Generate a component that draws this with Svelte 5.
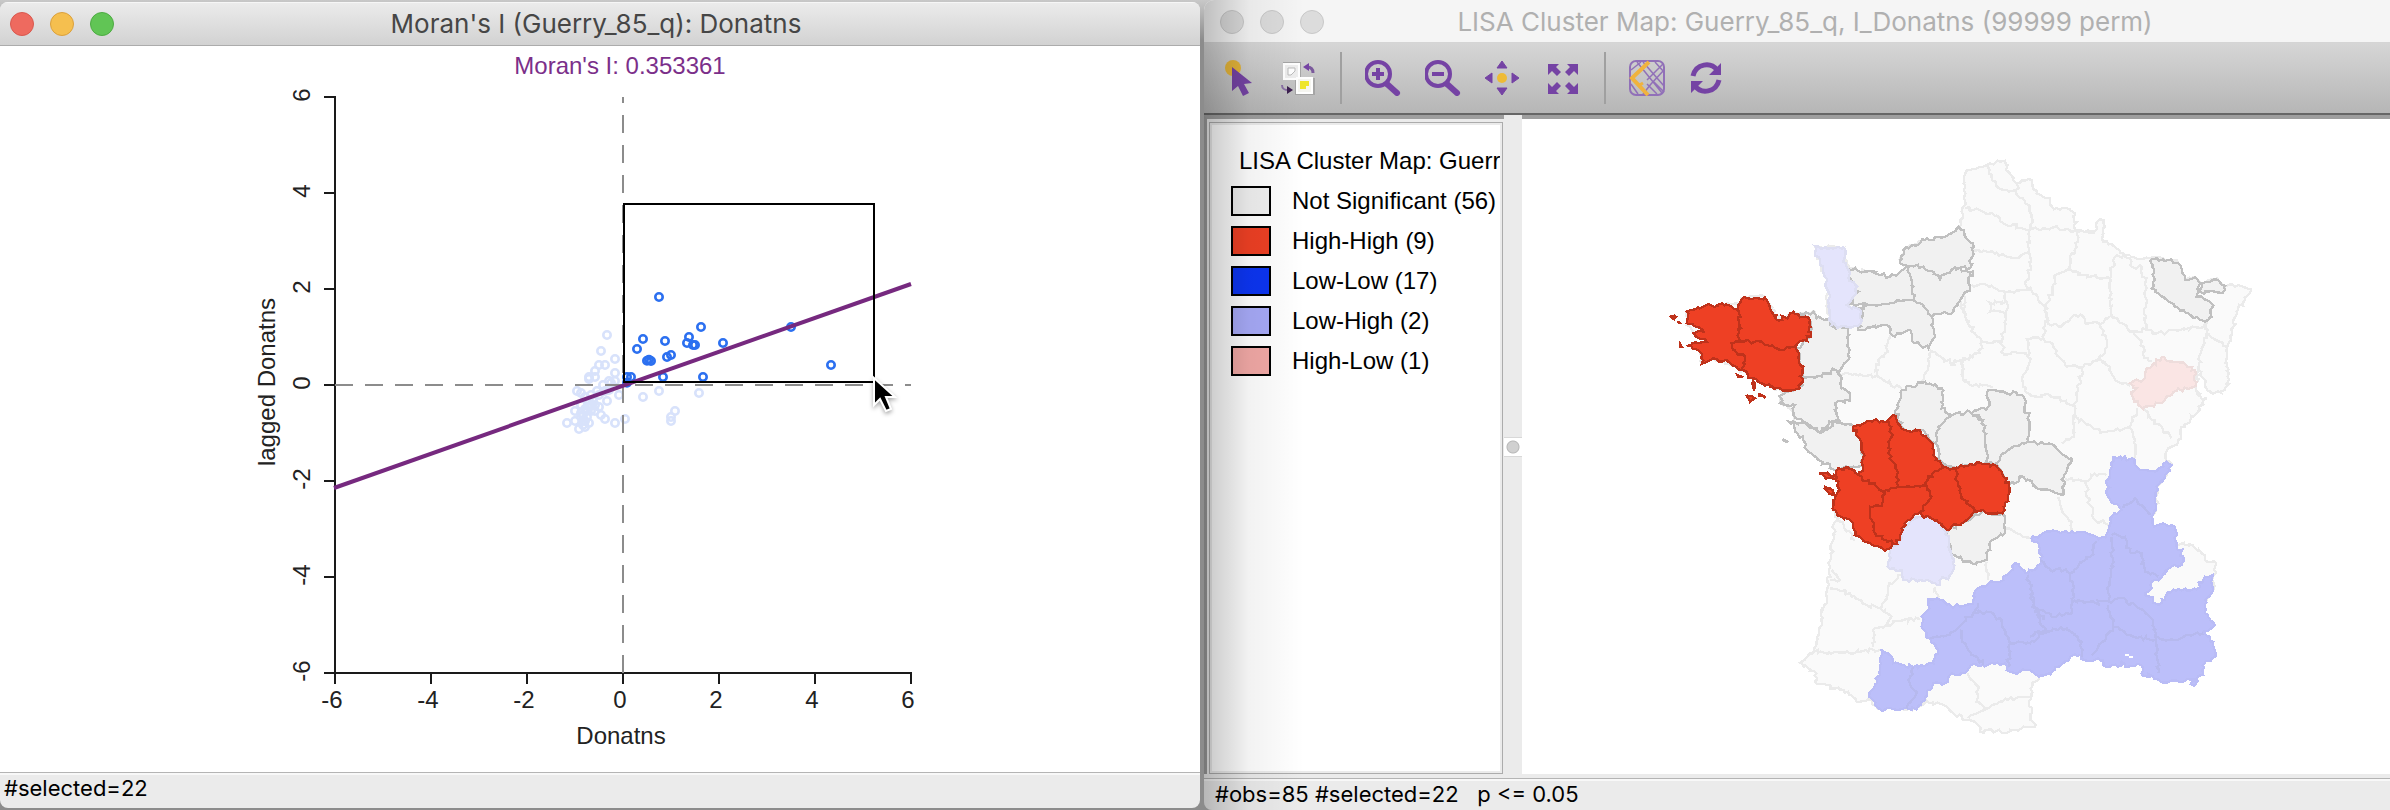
<script>
  // Plot coordinates: one data unit is 48 user units, origin at (623, 385).
  const px = (v) => 623 + v * 48;
  const py = (v) => 385 - v * 48;
  const ticks = [-6, -4, -2, 0, 2, 4, 6];

  const pairs = (s) => s.trim().split(/\s+/).map((p) => p.split(',').map(Number));

  // Scatter positions in thirds of a unit from (540, 270).
  const selected = pairs(
    '357,81 483,171 309,207 375,213 447,201 441,219 459,225 465,225 549,219 291,237 393,255 381,261 321,272 327,269 333,273 369,321 489,321 261,321 273,321 261,338 753,171 873,285'
  );
  const others = pairs(
    '201,195 183,243 225,267 177,285 195,285 165,303 225,309 147,321 165,321 147,327 207,333 213,339 189,345 111,363 237,375 207,360 201,393 309,381 357,363 477,369 405,423 393,453 393,441 81,459 105,423 123,405 117,477 105,453 129,435 141,441 147,459 135,471 153,423 165,423 165,405 177,411 183,435 195,447 225,459 255,447 135,453 123,441 123,429 147,411 123,369 135,381 153,375 177,375 141,423 171,363 195,363 159,393 129,453 225,333 147,393 135,417 153,405 129,465'
  );

  const legend = [
    ['Not Significant (56)', 'none'],
    ['High-High (9)', 'hh'],
    ['Low-Low (17)', 'll'],
    ['Low-High (2)', 'lh'],
    ['High-Low (1)', 'hl']
  ];

  // Map sheets: a letter in a path switches the sheet its points are measured on.
  const sheets = { a: [0, 0], b: [900, 0], c: [360, 720], d: [1140, 720] };

  function noise(x, y) {
    const n = Math.sin(x * 12.9898 + y * 78.233) * 43758.5453;
    return (n - Math.floor(n)) * 2 - 1;
  }

  // Reads a path and roughens each edge so that shared borders stay identical.
  function shape(src, closed) {
    let off = sheets.a;
    const nums = [];
    for (const t of src.trim().split(/[\s,]+/)) {
      if (sheets[t]) off = sheets[t];
      else nums.push(+t + off[nums.length % 2]);
    }
    const pts = [];
    for (let i = 0; i < nums.length; i += 2) pts.push([nums[i], nums[i + 1]]);
    if (closed) pts.push(pts[0]);
    const out = [pts[0]];
    for (let i = 1; i < pts.length; i++) {
      const [x0, y0] = pts[i - 1];
      const [x1, y1] = pts[i];
      const n = Math.max(1, Math.round(Math.hypot(x1 - x0, y1 - y0) / 9));
      for (let k = 1; k <= n; k++) {
        const x = Math.round(x0 + ((x1 - x0) * k) / n);
        const y = Math.round(y0 + ((y1 - y0) * k) / n);
        out.push(k === n ? [x, y] : [x + Math.round(noise(x, y) * 6), y + Math.round(noise(y, x) * 6)]);
      }
    }
    return 'M' + out.map((p) => p.join(' ')).join('L') + (closed ? 'Z' : '');
  }

  const area = (list) => list.map((s) => shape(s, true)).join('');
  const lines = (list) => list.map((s) => shape(s, false)).join('');

  const country = area([
    `b 45 105 60 90 100 80 120 70 165 62 175 95 198 130 225 122 245 120 260 160 300 175 312 208 350 205 375 225 380 275 435 272 442 245 462 240 460 305 500 325 540 355 600 355 640 355 685 370 705 420 730 412 755 430 800 415 825 440 865 435 903 447 860 515 845 585 832 620 830 680 837 720 825 750 785 760 765 735 745 690 737 740 752 770 770 775 740 820 693 862
     d 453 178 415 205 408 245 425 250 405 290 380 320 378 390 365 410 370 440 400 430 435 440 440 490 490 497 515 520 525 540 557 548 558 580 548 590 550 625 525 660 525 700 555 735 520 755 550 785 557 820 525 850 520 885 460 905 400 908 370 890 335 880 330 855 285 862 275 845 262 860 220 855 218 840 155 838 150 825 120 830 75 870 28 890 15 905 2 925 2 1020 15 1040
     c 760 1040 710 1060 665 1050 630 1055 625 1035 590 1020 550 1000 520 975 470 962 440 985 380 990 330 988 295 958 260 965 235 935 170 915 135 905 140 880 90 848 130 820 150 740 170 650 180 560 195 425 205 415 190 390 200 350 210 310 200 270 145 240 115 215 100 180 75 155 70 125 70 100 30 65 35 45
     a 400 755 360 740 305 715 260 680 235 670 190 655 155 670 150 640 170 600 135 580 110 555 110 515 160 500 215 490 270 498 275 475 345 470 385 540 430 515 480 520 495 515 500 535 540 535 530 500 535 420 510 370 495 318 580 325 580 355 600 385 650 395 720 410 775 380 750 365 765 325 825 300 885 290 925 260 940 225`
  ]);

  const borders = lines([
    'b 45 205 90 210 150 235 160 250 240 268',
    'b 110 75 125 115 160 150 200 150',
    'b 200 130 200 165 225 185 245 225 240 268',
    'b 240 268 310 262 375 272 435 280',
    'b 65 330 75 332 140 338 180 352 240 340',
    'b 240 268 235 320 242 380 225 430 250 462 285 500 292 540 280 595 230 597 240 640 232 685 215 720 225 755',
    'b 65 435 110 435 165 455 245 450',
    'b 380 280 380 320 360 350 360 388 315 405 300 480 285 510 290 545',
    'b 360 388 400 405 440 412 480 415 495 350 540 345',
    'b 540 355 545 380 575 380 590 445 585 550 590 570 620 580 690 570 750 565 770 545',
    'b 480 415 485 530 550 575 590 570',
    'b 292 545 330 562 375 525 400 530 405 550 450 552 480 530',
    'b 450 552 470 600 465 640 445 655 400 680 350 680 310 620 280 595',
    'b 445 655 480 680 495 720 540 738',
    'b 550 575 580 620 580 645 605 665',
    'b 770 545 770 580 752 640 745 690',
    'b 770 580 830 620',
    'b 40 465 45 530 75 580 95 605 155 605 165 560 170 455',
    'b 170 485 118 488 120 515 165 522',
    'b 95 605 90 640 35 660 0 675',
    'b 35 660 40 720 60 735 110 735 130 740',
    'b 155 605 160 640 232 640',
    'b 225 755 260 770 300 765 375 800 385 750 395 680',
    'b 375 800 370 840 372 890 335 910',
    'b 375 830 450 878 540 865 560 805',
    'b 540 865 555 900 555 965',
    'b 580 805 605 840 665 895',
    'd 105 295 140 300 180 298 180 283 230 285',
    'd 170 305 170 350 185 380 190 415 235 435',
    'd 85 350 95 390 125 425 125 455',
    'c 705 445 740 460 785 475',
    'c 650 545 655 600',
    'c 495 620 500 655',
    'c 180 625 240 640 290 675 330 685 350 650 355 620 395 585',
    'c 330 685 365 710 350 735 315 745 310 800',
    'c 350 735 400 720 450 718',
    'c 130 815 225 818 330 810',
    'c 205 415 255 480',
    'c 185 570 210 600 180 600',
    'c 595 880 600 895 625 920 620 965 655 985 690 965 750 950 785 955',
    'c 655 985 595 1015',
    'a 570 700 640 708 680 708 685 660 705 640 720 585',
    'a 680 708 755 745',
    'a 840 630 835 680 815 725',
    'a 840 630 900 670 960 655',
    'a 935 655 940 720 960 725',
    'a 930 480 945 530 960 545'
  ]);

  const plain = area([
    'a 750 370 760 330 825 300 885 290 925 260 968 310 960 385 915 382 870 418 820 380 775 380',
    'a 775 380 820 380 870 418 915 382 968 395 950 455 928 485 910 515 845 530 820 495 790 480 790 440',
    'a 595 388 650 395 720 410 775 380 790 440 790 480 720 490 655 495 590 495 625 455 600 415',
    'a 630 505 655 495 720 490 790 480 820 495 845 530 855 590 835 625 785 600 780 570 735 590 705 555 625 570 635 540',
    'a 450 525 490 515 500 535 540 540 550 560 597 560 595 660 570 690 545 690 515 710 460 712 440 625 483 590 483 545',
    'a 395 765 450 740 460 712 515 710 545 690 570 705 575 745 600 760 600 782 555 790 565 835 530 870 515 878 470 850 430 825 435 795 390 790',
    'c 70 125 95 128 150 158 175 135 200 120 250 140 275 190 280 255 235 262 200 270 145 240 115 215 100 180 75 155',
    'c 375 100 395 30 465 5 515 25 515 85 548 105 505 140 495 190 460 150 405 150',
    'c 548 105 600 95 640 120 645 185 655 250 600 258 525 262 495 190 505 140',
    'c 605 100 655 80 655 30 700 35 755 45 775 110 775 185 715 210 680 250 655 250 645 185 640 120',
    'c 680 250 715 210 775 185 850 195 880 225 905 245 880 295 880 345 800 325 760 290 715 320',
    'c 530 455 570 430 640 393 700 405 705 460 660 485 650 540 605 550 550 525 530 490',
    'b 600 362 640 358 685 370 705 420 735 412 752 430 740 470 785 490 785 530 765 545 690 512 655 485 605 445 612 400',
    'b 755 430 800 418 825 438 818 460 750 455',
    'c 55 125 68 128 62 132',
    'c 38 178 55 186 44 184'
  ]);

  const pale = area([
    'a 495 318 520 325 580 322 585 350 580 365 592 385 595 415 622 440 610 470 590 495 630 510 635 540 625 558 590 560 545 555 535 500 532 420 510 375',
    'c 455 402 500 420 530 455 535 500 553 540 545 580 500 615 470 600 400 600 395 570 353 560 360 505 395 475 400 445'
  ]);

  const low = area([
    `d 250 232 305 235 330 270 375 275 410 245 425 255 405 285 380 320 378 388 365 410 372 440 400 430 435 440 440 490 460 530 455 555 425 560 390 595 365 605 365 625 345 640 385 675 405 650 430 628 500 628 520 600 548 585 550 630 525 660 525 700 555 735 520 755 550 785 557 820 525 850 520 885 460 905 400 908 370 890 335 880 330 855 285 862 275 845 262 860 220 855 218 840 155 838 150 825 120 830 75 870 28 890
     c 775 870 735 880 710 870 705 850 640 855 600 858 585 880 540 885 525 910 490 910 465 960 440 988 380 990 330 988 297 950 320 900 330 860 332 808 365 830 370 850 430 862 490 850 495 825 505 810 480 775 455 740 455 710 478 685 475 658 510 660 545 680 610 670 615 635 660 605 700 600 735 550 775 580 815 550 808 500 785 475 830 455
     d 120 460 175 462 205 478 235 455 240 415 275 390 235 350 230 300`,
    'd 482 912 502 904 496 914'
  ]);

  const lowBorders = lines([
    'd 280 385 315 355 360 405',
    'd 245 465 285 470 300 515 335 520 345 575 385 590',
    'd 245 470 250 560 235 620 235 665',
    'd 200 485 180 530 120 580 130 640 125 700 65 710 15 685 0 640',
    'd 30 540 60 570 90 565 120 580',
    'd 130 660 165 670 235 665 270 655 340 690 370 720 375 770 385 880',
    'd 375 770 430 780 480 765 520 760',
    'd 235 675 250 740 205 800 185 825',
    'd 250 740 310 770 375 780',
    'd 0 770 45 750 110 745 155 785 155 830',
    'd 45 750 15 690',
    'c 480 775 540 765 610 700 650 695 695 720 720 790 715 860',
    'c 570 750 590 800 640 855',
    'c 720 790 780 790 830 750',
    'c 775 585 790 680 820 720',
    'c 430 862 415 900 440 940 410 985',
    'c 610 700 625 670'
  ]);

  const pink = area(['b 635 652 660 665 700 668 735 690 737 738 680 752 630 790 580 807 545 765 560 745 540 730 585 715 590 685']);

  const high = area([
    'a 215 490 265 510 270 605 245 610 250 630 285 650 275 690 235 665 190 655 155 672 150 635 110 618 170 605 165 597 130 580 160 575 140 562 110 550 110 515 160 500',
    'a 275 478 345 472 365 515 385 542 430 515 480 540 483 590 435 620 390 630 335 605 270 605 265 510',
    'a 245 610 270 605 335 605 390 630 435 620 445 650 460 680 450 745 400 752 360 740 305 715 275 690 285 650 250 630',
    'a 62 530 78 530 72 538',
    'a 85 544 89 549 86 549',
    'a 92 615 95 620 92 620',
    'a 290 768 315 775 300 785',
    'a 262 705 280 712 266 712',
    'a 309 722 315 730 312 748',
    'a 327 760 345 774 340 768',
    'c 250 140 300 122 355 122 365 160 355 220 380 270 385 320 340 335 265 285 280 260 275 190',
    'c 355 122 370 105 405 150 450 150 490 195 490 225 520 262 475 290 470 320 385 320 380 270 355 220 365 160',
    'c 205 265 235 262 265 285 340 335 335 378 300 380 305 420 318 465 370 492 345 512 300 490 255 465 250 435 190 390 190 360 210 330 200 290',
    'c 147 280 178 285 200 292 196 298 165 290',
    'c 165 320 182 326 196 350 178 342',
    'c 340 335 385 320 470 320 485 350 450 395 395 445 390 480 370 492 318 465 305 420 300 380 335 378',
    'c 475 290 520 262 552 265 565 310 575 355 620 395 575 430 530 450 500 420 455 405 450 395 485 350 470 320',
    'c 552 265 600 252 680 258 710 295 717 340 697 400 665 400 640 390 620 395 575 355 565 310'
  ]);
</script>

<main class="desktop">
  <section class="window front" aria-label="Moran scatter plot">
    <header class="titlebar">
      <div class="lights">
        <button class="light close" aria-label="Close"></button>
        <button class="light minimise" aria-label="Minimise"></button>
        <button class="light expand" aria-label="Zoom"></button>
      </div>
      <h1>Moran's I (Guerry_85_q): Donatns</h1>
    </header>
    <div class="plot">
      <svg viewBox="0 46 1200 726" role="img" aria-label="Moran's I scatter plot">
        <text class="stat" x="620" y="74">Moran's I: 0.353361</text>
        <path class="axis" d="M335 96V673H912" />
        {#each ticks as t}
          <path class="axis" d="M324 {py(t)}H335M{px(t)} 673V684" />
          <text x={px(t) - 3} y="708">{t}</text>
          <text transform="translate(310 {py(t) - 2}) rotate(-90)">{t}</text>
        {/each}
        <text x="621" y="744">Donatns</text>
        <text transform="translate(275 382) rotate(-90)">lagged Donatns</text>
        <g class="faded">
          {#each others as [x, y]}<circle cx={540 + x / 3} cy={270 + y / 3} r="3.7" />{/each}
        </g>
        <path class="guide" d="M623 673V97M335 385H911" />
        <g class="picked">
          {#each selected as [x, y]}<circle cx={540 + x / 3} cy={270 + y / 3} r="3.7" />{/each}
        </g>
        <path class="fit" d="M334 488L911 284" />
        <rect class="band" x="624" y="204" width="250" height="178" />
        <path class="pointer" d="M874 378V405L880 399L886 411L891 409L886 397H895Z" />
      </svg>
    </div>
    <footer class="status">#selected=22</footer>
  </section>

  <section class="window back" aria-label="LISA cluster map">
    <header class="titlebar">
      <div class="lights">
        <button class="light" aria-label="Close"></button>
        <button class="light" aria-label="Minimise"></button>
        <button class="light" aria-label="Zoom"></button>
      </div>
      <h1>LISA Cluster Map: Guerry_85_q, I_Donatns (99999 perm)</h1>
    </header>
    <nav class="toolbar" aria-label="Map tools">
      <button aria-label="Select">
        <svg viewBox="0 0 36 36"><circle cx="12" cy="8" r="8" fill="#e5b53a" /><path fill="#7543a4" d="M11 7V31L17 26L22 36L28 33L23 24L31 23Z" /></svg>
      </button>
      <button aria-label="Invert selection">
        <svg viewBox="0 0 36 36">
          <path fill="#a5a5a5" d="M2 2H20V18H34V35H14V20H2Z" />
          <rect x="3" y="4" width="15" height="15" fill="#eee" stroke="#fff" stroke-width="2" />
          <path d="M7 15V8H14V11L10 15Z" fill="#fff" stroke="#bbb" stroke-width="1" />
          <rect x="16" y="18" width="15" height="15" fill="#f5f5f0" stroke="#fff" stroke-width="2" />
          <path d="M19 29V21H28V26H25V29Z" fill="#eee52c" />
          <path d="M32 13C32 9 30 7 26 7" fill="none" stroke="#7b5a9c" stroke-width="3" /><path d="M28 3V11L22 7Z" fill="#7543a4" />
          <path d="M1 25C1 29 3 30 8 30" fill="none" stroke="#8a70a5" stroke-width="2" /><path d="M6 26V34L12 30Z" fill="#3d2050" />
        </svg>
      </button>
      <span class="rule"></span>
      <button aria-label="Zoom in">
        <svg viewBox="0 0 36 36" fill="none" stroke="#7543a4"><circle cx="13" cy="14" r="12" stroke-width="4" /><path d="M13 8V20M7 14H19" stroke-width="4" /><path d="M22 24L32 33" stroke-width="6" stroke-linecap="round" /></svg>
      </button>
      <button aria-label="Zoom out">
        <svg viewBox="0 0 36 36" fill="none" stroke="#7543a4"><circle cx="13" cy="14" r="12" stroke-width="4" /><path d="M7 14H19" stroke-width="4" /><path d="M22 24L32 33" stroke-width="6" stroke-linecap="round" /></svg>
      </button>
      <button aria-label="Pan">
        <svg viewBox="0 0 36 36"><circle cx="17" cy="18" r="5" fill="#eebb35" /><path fill="#7543a4" stroke="#7543a4" stroke-linejoin="round" d="M17 1L22 8H12ZM17 35L22 28H12ZM0 18L7 13V23ZM34 18L27 13V23Z" /></svg>
      </button>
      <button aria-label="Full extent">
        <svg viewBox="0 0 36 36"><path fill="#7543a4" d="M3 4H14L11 7L16 12L12 16L7 11L3 15ZM33 4H22L25 7L20 12L24 16L29 11L33 15ZM3 34H14L11 31L16 26L12 22L7 27L3 23ZM33 34H22L25 31L20 26L24 22L29 27L33 23Z" /></svg>
      </button>
      <span class="rule"></span>
      <button aria-label="Base map">
        <svg viewBox="0 0 36 36" fill="none" stroke="#9170b8" stroke-width="1.5">
          <rect x="1" y="1" width="34" height="34" rx="6" stroke-width="2" />
          <path d="M8 2L33 33M14 2L35 26M2 24L9 34M34 4L18 20M35 10L22 24L14 34M26 2L35 12M2 10L12 2M28 34L18 24M25 22L35 32" />
          <path d="M20 2L3 18L19 35" stroke="#f0b33e" stroke-width="4" /><path d="M9 26L14 23" stroke="#f0b33e" stroke-width="3" />
        </svg>
      </button>
      <button aria-label="Refresh">
        <svg viewBox="0 0 36 36"><g fill="none" stroke="#7543a4" stroke-width="5"><path d="M4 16C7 3 22 2 28 10" /><path d="M30 20C27 33 12 34 6 26" /></g><path fill="#7543a4" d="M32 3V15H20ZM2 33V21H14Z" /></svg>
      </button>
    </nav>
    <div class="body">
      <aside class="legend">
        <div class="frame">
          <h2>LISA Cluster Map: Guerr</h2>
          <ul>
            {#each legend as [name, kind]}
              <li><span class="swatch {kind}"></span>{name}</li>
            {/each}
          </ul>
        </div>
      </aside>
      <div class="splitter"><span class="grip"></span></div>
      <div class="map">
        <svg viewBox="1522 119 868 655" role="img" aria-label="Cluster map of France">
          <g transform="translate(1650 140) scale(0.333333)" shape-rendering="crispEdges">
            <path d={country} class="base" />
            <path d={borders} class="line" />
            <path d={plain} class="plain" />
            <path d={pale} class="pale" />
            <path d={low} class="low" />
            <path d={lowBorders} class="line low-line" />
            <path d="M1425 1544H1438M1437 1552H1450" class="lake" />
            <path d={pink} class="pink" />
            <path d={high} class="high" />
          </g>
        </svg>
      </div>
    </div>
    <footer class="status">#obs=85 #selected=22   p &lt;= 0.05</footer>
  </section>
</main>

<style>
  :global(body) {
    margin: 0;
    background: #929292;
  }
  .desktop {
    display: grid;
    grid-template-columns: 1200fr 1186fr;
    column-gap: 4px;
    height: 100vh;
    background: linear-gradient(#c8c8c8, #8c8c8c 40px);
    overflow: hidden;
    color: #000;
    font-family: 'Liberation Sans', Arial, sans-serif;
    font-size: 24px;
  }
  .window {
    display: flex;
    flex-direction: column;
    min-width: 0;
    min-height: 0;
    overflow: hidden;
    background: #ebebeb;
  }
  .front {
    margin: 2px 0;
    border-radius: 8px;
  }
  .back {
    position: relative;
    border-radius: 10px 0 0 8px;
  }
  .back::after {
    content: '';
    position: absolute;
    inset: 0 auto 0 0;
    width: 100px;
    background: linear-gradient(90deg, rgba(0, 0, 0, 0.22), rgba(0, 0, 0, 0.05) 45%, transparent);
    pointer-events: none;
  }
  .titlebar {
    display: grid;
    grid-template-columns: 1fr auto 1fr;
    align-items: center;
    box-sizing: border-box;
    flex: none;
  }
  .front .titlebar {
    height: 44px;
    padding: 0 18px 0 10px;
    border-top: 1px solid #f6f6f6;
    border-bottom: 1px solid #acacac;
    background: linear-gradient(#ebebeb, #d2d2d2);
  }
  .back .titlebar {
    height: 43px;
    padding: 2px 0 0 16px;
    border-bottom: 1px solid #d5d5d5;
    background: #f5f5f5;
  }
  h1 {
    margin: 0;
    color: #464646;
    font: 400 26px/32px Inter, sans-serif;
    white-space: nowrap;
  }
  .back h1 {
    color: #b0b0b0;
  }
  .lights {
    display: flex;
    gap: 16px;
  }
  .light {
    width: 24px;
    height: 24px;
    padding: 0;
    border: 1px solid #c8c8c8;
    border-radius: 50%;
    background: #dcdcdc;
  }
  .close {
    border-color: #d9584e;
    background: #ee6a5f;
  }
  .minimise {
    border-color: #dba03c;
    background: #f5bf4f;
  }
  .expand {
    border-color: #4dab42;
    background: #61c555;
  }
  .plot {
    flex: 1;
    min-height: 0;
    background: #fff;
  }
  .plot svg,
  .map svg {
    display: block;
    width: 100%;
    height: 100%;
  }
  .plot text {
    fill: #222;
    text-anchor: middle;
  }
  .plot .stat {
    fill: #7b2f8a;
  }
  .axis {
    fill: none;
    stroke: #1a1a1a;
    stroke-width: 2;
  }
  .guide {
    fill: none;
    stroke: #8c8c8c;
    stroke-width: 2;
    stroke-dasharray: 18 12;
  }
  .faded,
  .picked {
    fill: none;
    stroke: #d8e2fb;
    stroke-width: 2.6;
  }
  .picked {
    stroke: #2c70f0;
  }
  .fit {
    stroke: #76297f;
    stroke-width: 4;
  }
  .band {
    fill: none;
    stroke: #000;
    stroke-width: 2;
  }
  .pointer {
    stroke: #fff;
    stroke-width: 2;
    filter: drop-shadow(0 2px 2px rgba(0, 0, 0, 0.35));
  }
  .status {
    box-sizing: border-box;
    flex: none;
    border-top: 1px solid #b4b4b4;
    box-shadow: inset 0 2px #f8f8f8;
    font: 400 22px/26px Inter, sans-serif;
    white-space: pre;
  }
  .front .status {
    height: 36px;
    padding: 2px 4px;
  }
  .back .status {
    height: 32px;
    padding: 2px 11px;
  }
  .toolbar {
    display: flex;
    align-items: center;
    box-sizing: border-box;
    flex: none;
    height: 72px;
    padding: 0 0 0 5px;
    border-bottom: 2px solid #666;
    background: linear-gradient(#d6d6d6, #b6b6b6);
  }
  .toolbar button {
    display: grid;
    place-items: center;
    width: 60px;
    height: 60px;
    padding: 0;
    border: 0;
    background: none;
  }
  .toolbar svg {
    width: 36px;
    height: 36px;
  }
  .rule {
    width: 2px;
    height: 52px;
    margin: 0 11px;
    background: #a0a0a0;
  }
  .body {
    display: flex;
    flex: 1;
    min-height: 0;
    margin-bottom: 4px;
  }
  .legend {
    box-sizing: border-box;
    flex: none;
    width: 300px;
    padding: 3px 1px 0 2px;
    border-top: 4px solid #9e9e9e;
    border-left: 3px solid #9a9a9a;
  }
  .frame {
    box-sizing: border-box;
    height: 100%;
    padding: 26px 0 0 21px;
    overflow: hidden;
    border: 1px solid #acacac;
    outline: 2px solid #ebebeb;
    outline-offset: -3px;
    background: #fff;
  }
  h2 {
    margin: 0 0 0 8px;
    font: inherit;
    line-height: 24px;
    white-space: nowrap;
  }
  ul {
    display: grid;
    gap: 10px;
    margin: 0;
    padding: 13px 0 0;
    list-style: none;
  }
  li {
    display: flex;
    align-items: center;
    gap: 21px;
    height: 30px;
    line-height: 26px;
    white-space: nowrap;
  }
  .swatch {
    box-sizing: border-box;
    width: 40px;
    height: 30px;
    border: 2px solid #000;
    background: #f0f0f0;
  }
  .hh {
    background: #ee4024;
  }
  .ll {
    background: #0c35f2;
  }
  .lh {
    background: #a7aaf8;
  }
  .hl {
    background: #f2a9a6;
  }
  .splitter {
    display: grid;
    place-items: center;
    flex: none;
    width: 18px;
    padding-top: 4px;
    background: #ebebeb;
  }
  .grip {
    box-sizing: border-box;
    width: 18px;
    height: 20px;
    border: solid #d8d8d8;
    border-width: 1px 0;
    background: radial-gradient(circle, #d0d0d0 5px, #b8b8b8 6px, #fff 7px);
  }
  .map {
    flex: 1;
    min-width: 0;
    border-top: 4px solid #9e9e9e;
    background: #fff;
  }
  .base {
    fill: #fafafa;
    stroke: #ebebeb;
    stroke-width: 7;
  }
  .line {
    fill: none;
    stroke: #ebebeb;
    stroke-width: 7;
  }
  .plain {
    fill: #f1f1f1;
    stroke: #c0c0c0;
    stroke-width: 7;
  }
  .pale {
    fill: #e4e4fc;
    stroke: #dddef2;
    stroke-width: 7;
  }
  .low {
    fill: #bcbffa;
    stroke: #b9bcf6;
    stroke-width: 7;
  }
  .low-line {
    stroke: #b6b9ee;
  }
  .lake {
    stroke: #fff;
    stroke-width: 6;
  }
  .pink {
    fill: #fae5e4;
    stroke: #eedddc;
    stroke-width: 7;
  }
  .high {
    fill: #ee4024;
    stroke: #bf321b;
    stroke-width: 7;
  }
</style>
